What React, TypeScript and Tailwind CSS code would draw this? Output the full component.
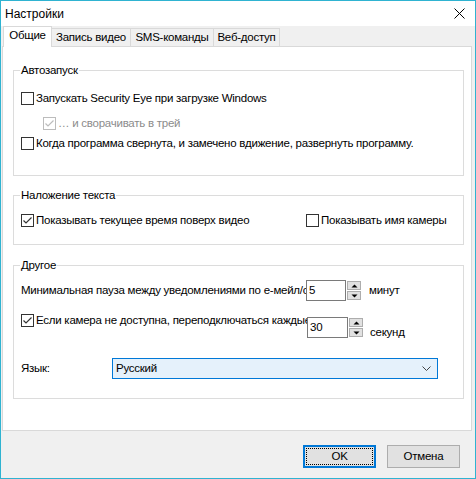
import React from "react";

const font = { fontFamily: '"Liberation Sans", Arial, sans-serif' };

const CheckBox = ({ checked = false, disabled = false }: { checked?: boolean; disabled?: boolean }) => (
  <span
    className={`flex h-[13px] w-[13px] shrink-0 items-center justify-center border bg-white ${
      disabled ? "border-[#bcbcbc]" : "border-[#333333]"
    }`}
  >
    {checked && (
      <svg width="11" height="11" viewBox="0 0 11 11">
        <path
          d="M1.5 5.5 L4 8 L9.5 2.5"
          fill="none"
          stroke={disabled ? "#bcbcbc" : "#333333"}
          strokeWidth="1.2"
        />
      </svg>
    )}
  </span>
);

const GroupBox = ({ title, className, children }: { title: string; className: string; children: React.ReactNode }) => (
  <div className={`relative border border-[#dcdcdc] ${className}`}>
    <span className="absolute -top-[9px] left-[6px] bg-white px-[1px] leading-[16px] text-black">{title}</span>
    {children}
  </div>
);

const Spinner = () => (
  <div className="flex w-[14px] flex-col gap-[1px]">
    <span className="flex h-[9px] items-center justify-center border border-[#adadad] bg-[#e1e1e1]">
      <svg width="7" height="4" viewBox="0 0 7 4">
        <path d="M0.5 3.5 L3.5 0.5 L6.5 3.5 Z" fill="#000" />
      </svg>
    </span>
    <span className="flex h-[9px] items-center justify-center border border-[#adadad] bg-[#e1e1e1]">
      <svg width="7" height="4" viewBox="0 0 7 4">
        <path d="M0.5 0.5 L3.5 3.5 L6.5 0.5 Z" fill="#000" />
      </svg>
    </span>
  </div>
);

const tabs = ["Запись видео", "SMS-команды", "Веб-доступ"];
const tabWidths = ["w-[80px]", "w-[84px]", "w-[67px]"];

export default function App() {
  return (
    <div
      className="flex h-[479px] w-[476px] flex-col border border-[#2fb3d1] bg-[#f0f0f0] text-[11.5px] tracking-[-0.25px] text-black"
      style={font}
    >
      {/* title bar */}
      <div className="flex h-[25px] shrink-0 items-center justify-between bg-white pl-[4px] pr-[10px]">
        <span className="text-[12px] tracking-normal">Настройки</span>
        <svg width="11" height="11" viewBox="0 0 11 11">
          <path d="M0.5 0.5 L10.5 10.5 M10.5 0.5 L0.5 10.5" stroke="#000" strokeWidth="1" />
        </svg>
      </div>

      {/* tabs */}
      <div className="relative z-10 flex h-[20px] shrink-0 items-end pl-[2px]">
        <div className="mb-[-1px] flex h-[21px] w-[49px] items-center justify-center border border-b-0 border-[#d9d9d9] bg-white pb-[2px]">
          Общие
        </div>
        {tabs.map((t, i) => (
          <div
            key={t}
            className={`-ml-[1px] flex h-[18px] items-center justify-center border border-b-0 border-[#d9d9d9] bg-[#f0f0f0] ${tabWidths[i]}`}
          >
            {t}
          </div>
        ))}
      </div>

      {/* page */}
      <div className="ml-[1px] flex h-[385px] w-[470px] shrink-0 flex-col border border-[#d9d9d9] bg-white pl-[10px] pr-[7px]">
        <GroupBox title="Автозапуск" className="mt-[23px] h-[106px] pl-[7px] pt-[20px]">
          <label className="flex h-[15px] items-center gap-[2px]">
            <CheckBox />
            <span>Запускать Security Eye при загрузке Windows</span>
          </label>
          <label className="ml-[22px] mt-[10px] flex h-[15px] items-center gap-[2px] text-[#8c8c8c]">
            <CheckBox checked disabled />
            <span>… и сворачивать в трей</span>
          </label>
          <label className="mt-[5px] flex h-[15px] items-center gap-[2px]">
            <CheckBox />
            <span>Когда программа свернута, и замечено вдижение, развернуть программу.</span>
          </label>
        </GroupBox>

        <GroupBox title="Наложение текста" className="mt-[19px] h-[50px] pl-[7px] pt-[17px]">
          <div className="flex h-[15px] items-center">
            <label className="flex w-[285px] items-center gap-[2px]">
              <CheckBox checked />
              <span>Показывать текущее время поверх видео</span>
            </label>
            <label className="flex items-center gap-[2px]">
              <CheckBox />
              <span>Показывать имя камеры</span>
            </label>
          </div>
        </GroupBox>

        <GroupBox title="Другое" className="mt-[20px] h-[134px] pl-[7px] pt-[14px]">
          <div className="flex h-[21px] items-center">
            <span className="w-[285px] shrink-0 overflow-hidden whitespace-nowrap">
              Минимальная пауза между уведомлениями по е-мейл/смс
            </span>
            <span className="flex h-[21px] w-[40px] items-center border border-[#7a7a7a] bg-white pl-[2px]">5</span>
            <div className="ml-[1px]">
              <Spinner />
            </div>
            <span className="ml-[8px]">минут</span>
          </div>

          <div className="mt-[13px] flex h-[24px] items-start">
            <label className="flex h-[13px] w-[286px] shrink-0 items-center gap-[2px] overflow-hidden whitespace-nowrap">
              <CheckBox checked />
              <span>Если камера не доступна, переподключаться каждые</span>
            </label>
            <span className="mt-[3px] flex h-[21px] w-[41px] items-center border border-[#7a7a7a] bg-white pl-[2px]">
              30
            </span>
            <div className="ml-[1px] mt-[4px]">
              <Spinner />
            </div>
            <span className="ml-[7px] mt-[10px]">секунд</span>
          </div>

          <div className="mt-[20px] flex h-[21px] items-center">
            <span className="w-[91px]">Язык:</span>
            <div className="flex h-[21px] w-[326px] items-center justify-between border border-[#0078d7] bg-[#e5f1fb] pl-[3px] pr-[6px]">
              <span>Русский</span>
              <svg width="9" height="5" viewBox="0 0 9 5">
                <path d="M0.5 0.5 L4.5 4.5 L8.5 0.5" fill="none" stroke="#444" strokeWidth="1" />
              </svg>
            </div>
          </div>
        </GroupBox>
      </div>

      {/* buttons */}
      <div className="flex flex-1 items-start justify-end gap-[11px] pr-[15px] pt-[14px]">
        <button className="flex h-[23px] w-[73px] items-center justify-center border-2 border-[#0078d7] bg-[#e1e1e1] p-[1px]">
          <span className="flex h-full w-full items-center justify-center border border-dotted border-black">OK</span>
        </button>
        <button className="flex h-[23px] w-[73px] items-center justify-center border border-[#adadad] bg-[#e1e1e1]">
          Отмена
        </button>
      </div>
    </div>
  );
}
